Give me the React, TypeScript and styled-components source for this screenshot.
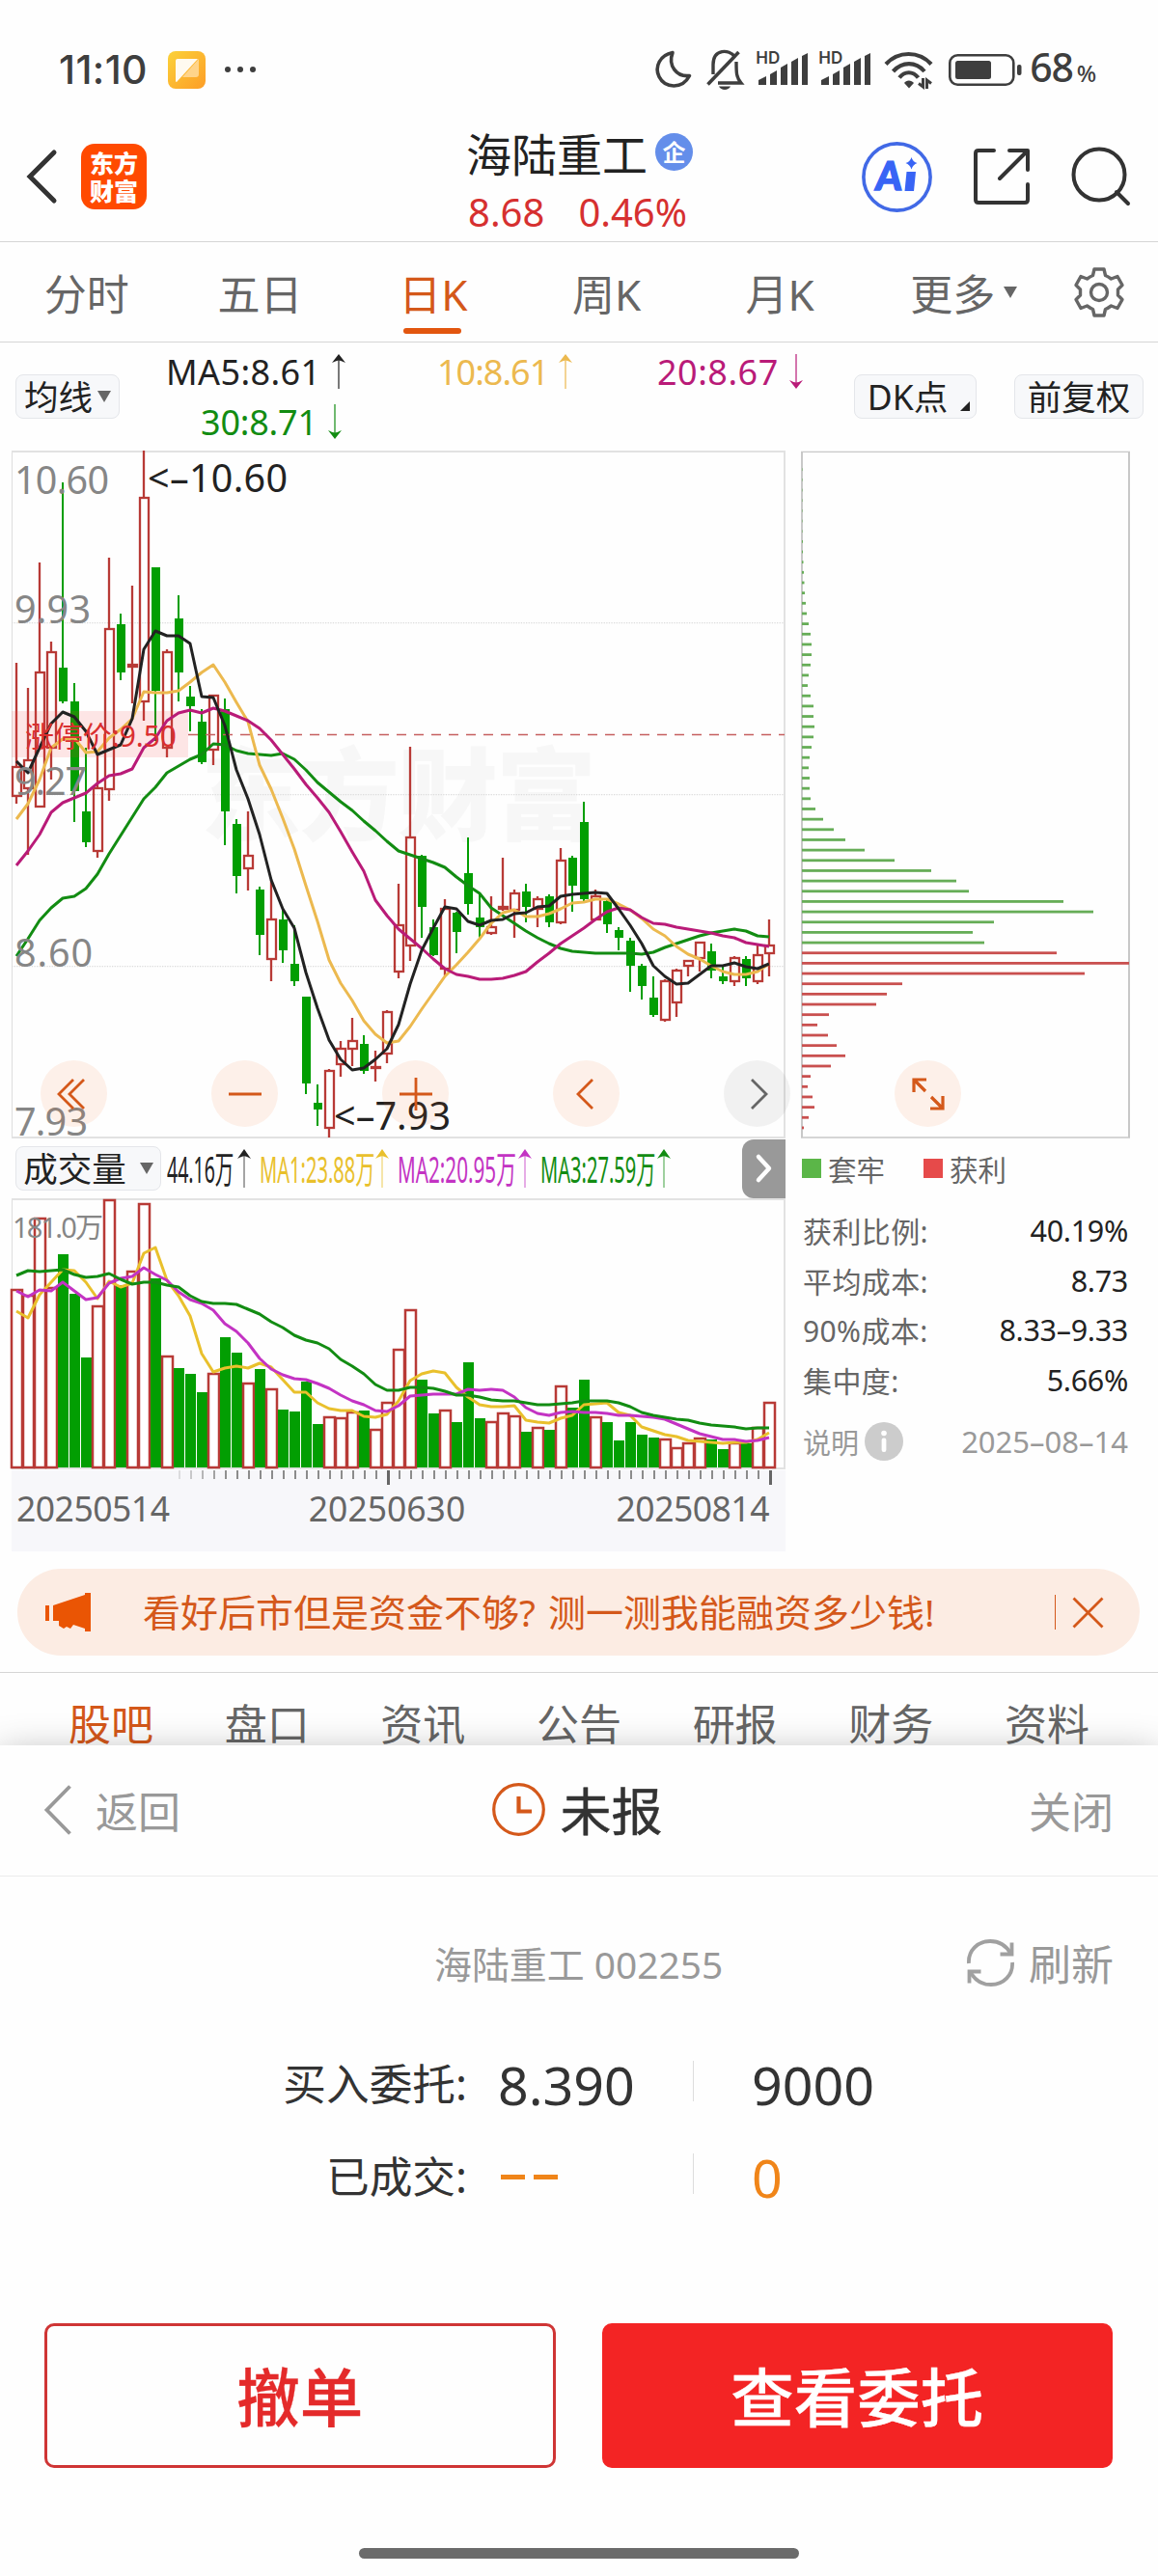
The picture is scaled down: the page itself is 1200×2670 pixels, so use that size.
import React from "react";
import styled, { createGlobalStyle } from "styled-components";

// [up?, high, body top, body bottom, low] in chart units
type ICandle = [number, number, number, number, number];

const START_X = 17;
const STEP = 12;
const RED = "#b83a36";
const GREEN = "#029e02";
const ORANGE = "#d4581a";

const candles: ICandle[] = [
  [1, 687, 795, 825, 833], [1, 713, 788, 817, 886], [1, 583, 697, 836, 836], [1, 665, 676, 775, 808],
  [0, 500, 692, 727, 729], [0, 708, 727, 820, 852], [0, 775, 841, 873, 878], [1, 782, 817, 882, 889],
  [1, 578, 652, 818, 830], [0, 636, 647, 697, 705], [1, 607, 689, 691, 729], [1, 467, 516, 727, 747],
  [0, 588, 588, 716, 768], [1, 673, 676, 775, 785], [0, 617, 641, 697, 727], [0, 711, 722, 732, 758],
  [0, 735, 748, 790, 792], [1, 721, 721, 777, 793], [0, 724, 735, 841, 876], [0, 849, 854, 908, 926],
  [1, 841, 887, 900, 923], [0, 919, 922, 969, 990], [1, 912, 953, 994, 1017], [0, 942, 953, 985, 998],
  [0, 959, 999, 1017, 1022], [0, 1033, 1033, 1123, 1134], [0, 1124, 1143, 1150, 1167], [1, 1108, 1110, 1169, 1179],
  [1, 1079, 1087, 1103, 1116], [1, 1055, 1079, 1087, 1105], [0, 1073, 1082, 1110, 1113], [1, 1089, 1106, 1107, 1121],
  [1, 1047, 1049, 1092, 1102], [1, 916, 959, 1007, 1014], [1, 774, 868, 980, 996], [0, 886, 887, 940, 972],
  [0, 953, 961, 990, 991], [1, 932, 942, 1004, 1011], [0, 945, 946, 966, 988], [0, 868, 905, 937, 948],
  [0, 925, 951, 961, 974], [1, 929, 961, 967, 969], [1, 889, 940, 942, 944], [1, 922, 926, 943, 972],
  [0, 916, 924, 940, 956], [1, 929, 932, 942, 961], [0, 927, 929, 956, 961], [1, 879, 892, 956, 958],
  [0, 887, 889, 918, 945], [0, 831, 852, 932, 934], [1, 922, 929, 953, 953], [0, 932, 934, 958, 967],
  [0, 961, 964, 972, 985], [0, 972, 975, 1001, 1028], [0, 999, 1001, 1022, 1036], [0, 1012, 1034, 1052, 1054],
  [1, 1015, 1017, 1057, 1059], [1, 1004, 1006, 1039, 1054], [1, 995, 996, 1001, 1012], [1, 977, 977, 993, 1007],
  [0, 978, 986, 1006, 1014], [0, 1002, 1012, 1017, 1020], [1, 991, 993, 1017, 1022], [0, 991, 994, 1014, 1022],
  [1, 978, 990, 1017, 1020], [1, 953, 980, 988, 1012],
];

const ma5 = [789, 801, 775, 750, 738, 743, 758, 782, 777, 772, 745, 673, 654, 659, 659, 667, 722, 723, 752, 798, 828, 865, 912, 942, 962, 1008, 1045, 1078, 1098, 1109, 1107, 1098, 1087, 1062, 1020, 985, 962, 940, 942, 955, 959, 954, 953, 947, 946, 940, 939, 929, 927, 926, 925, 926, 942, 959, 978, 1001, 1012, 1020, 1019, 1010, 1001, 1001, 998, 1002, 1004, 999];
const ma10 = [849, 833, 808, 775, 766, 765, 780, 779, 765, 756, 745, 717, 718, 718, 716, 707, 697, 689, 707, 728, 748, 793, 818, 848, 880, 918, 955, 995, 1019, 1037, 1058, 1072, 1081, 1079, 1064, 1046, 1029, 1012, 1000, 987, 973, 957, 946, 943, 950, 950, 947, 942, 936, 935, 932, 932, 937, 943, 952, 963, 970, 981, 989, 994, 1001, 1007, 1010, 1010, 1007, 999];
const ma20 = [897, 882, 865, 842, 832, 827, 822, 812, 804, 802, 797, 775, 765, 747, 739, 736, 739, 734, 737, 742, 747, 755, 767, 782, 797, 813, 827, 842, 862, 883, 903, 933, 949, 963, 973, 983, 994, 1004, 1010, 1012, 1015, 1015, 1014, 1011, 1007, 997, 988, 978, 970, 962, 953, 945, 941, 943, 951, 957, 958, 961, 963, 965, 967, 970, 972, 977, 979, 981];
const ma30 = [991, 973, 954, 941, 931, 929, 921, 906, 885, 866, 847, 828, 816, 801, 794, 787, 782, 771, 772, 778, 781, 782, 783, 781, 787, 798, 811, 821, 831, 840, 851, 861, 872, 882, 886, 890, 894, 899, 909, 918, 926, 941, 949, 957, 965, 972, 978, 983, 986, 987, 988, 988, 988, 988, 989, 987, 982, 978, 974, 970, 967, 965, 963, 965, 970, 971];

const volumes = [1336, 1342, 1262, 1334, 1300, 1341, 1407, 1353, 1243, 1332, 1317, 1247, 1325, 1405, 1418, 1424, 1443, 1423, 1386, 1402, 1433, 1419, 1439, 1461, 1463, 1432, 1476, 1468, 1469, 1463, 1462, 1481, 1453, 1398, 1357, 1430, 1465, 1461, 1474, 1412, 1470, 1473, 1464, 1467, 1484, 1479, 1482, 1436, 1459, 1430, 1468, 1474, 1493, 1474, 1487, 1490, 1491, 1500, 1495, 1490, 1492, 1502, 1495, 1496, 1479, 1453];
const vol1 = [1359, 1366, 1342, 1329, 1316, 1317, 1329, 1346, 1328, 1334, 1330, 1299, 1293, 1327, 1343, 1364, 1403, 1422, 1418, 1416, 1418, 1413, 1417, 1430, 1443, 1443, 1454, 1460, 1462, 1462, 1468, 1469, 1466, 1452, 1431, 1424, 1421, 1423, 1438, 1448, 1456, 1458, 1458, 1457, 1472, 1474, 1475, 1470, 1467, 1456, 1455, 1454, 1464, 1467, 1479, 1483, 1487, 1489, 1493, 1494, 1495, 1496, 1495, 1495, 1492, 1485];
const vol2 = [1338, 1344, 1337, 1338, 1329, 1338, 1347, 1345, 1330, 1325, 1323, 1314, 1321, 1327, 1339, 1347, 1351, 1358, 1372, 1380, 1392, 1408, 1419, 1425, 1429, 1430, 1434, 1439, 1446, 1452, 1456, 1462, 1463, 1457, 1447, 1446, 1445, 1445, 1445, 1440, 1441, 1440, 1441, 1448, 1459, 1465, 1467, 1464, 1463, 1464, 1464, 1465, 1467, 1467, 1468, 1469, 1471, 1476, 1481, 1486, 1489, 1492, 1492, 1494, 1493, 1490];
const vol3 = [1322, 1317, 1318, 1317, 1316, 1321, 1324, 1323, 1320, 1326, 1331, 1329, 1329, 1332, 1334, 1343, 1349, 1351, 1351, 1352, 1357, 1362, 1370, 1376, 1384, 1389, 1392, 1398, 1409, 1416, 1424, 1435, 1441, 1441, 1438, 1438, 1439, 1442, 1446, 1446, 1448, 1451, 1452, 1452, 1454, 1456, 1456, 1455, 1454, 1452, 1452, 1452, 1454, 1458, 1464, 1467, 1469, 1471, 1472, 1475, 1477, 1478, 1479, 1481, 1480, 1480];

const chips = [0.5, 0.5, 0.5, 0.5, 0.5, 0.5, 0.5, 1, 1, 1.5, 2, 2.5, 3, 4, 5, 7, 9, 10, 10, 9, 7, 6, 9, 12, 12, 13, 12, 10, 8, 7, 8, 8, 9, 14, 22, 33, 45, 65, 96, 134, 160, 173, 271, 302, 199, 177, 189, 264, 339, 293, 104, 88, 77, 28, 16, 27, 36, 45, 30, 9, 6, 11, 13, 7, 2];
const PROFIT_FROM = 47;

const toPoints = (list: number[]) => list.map((y, i) => `${START_X + i * STEP},${y}`).join(" ");

const Line = ({ list, color }: { list: number[]; color: string }) => (
  <polyline points={toPoints(list)} fill="none" stroke={color} strokeWidth="3" strokeLinejoin="round" />
);

const Arrow = ({ color, down, tall }: { color: string; down?: boolean; tall?: boolean }) => (
  <svg width="14" height={tall ? 40 : 36} viewBox="0 0 14 36" preserveAspectRatio="none" transform={down ? "rotate(180)" : undefined}>
    <path d="M7 4V36" stroke={color} strokeWidth="2" opacity={tall ? 0.4 : 0.6} />
    <path d="M7 0L14 9Q9 6.5 7 6.5Q5 6.5 0 9Z" fill={color} />
  </svg>
);

const KChart = () => (
  <svg width="802" height="713" viewBox="12 467 802 713">
    <g fill="#f7f7f7" fontSize="104" fontWeight="900">
      <text x="208" y="863" textLength="410">东方财富</text>
    </g>
    <path d="M12.5 467V1179" stroke="#dedede" strokeWidth="1" />
    <path d="M12 468H813V1179H12" fill="none" stroke="#e2e2e2" strokeWidth="2" />
    <path d="M12 645.7H812M12 823.7H812M12 1001.7H812" stroke="#dcdcdc" strokeWidth="1.3" strokeDasharray="1.3 1.3" />
    {candles.map(([up, high, top, bottom, low], i) => {
      const x = START_X + i * STEP;
      return up ? (
        <g key={i} stroke={RED} strokeWidth="2.3" fill="none">
          <path d={`M${x} ${high}V${top}M${x} ${bottom}V${low}`} />
          <rect x={x - 4} y={top} width="9" height={bottom - top} />
        </g>
      ) : (
        <g key={i} fill={GREEN}>
          <rect x={x - 1} y={high} width="2" height={low - high} />
          <rect x={x - 4} y={top} width="9" height={bottom - top} />
        </g>
      );
    })}
    <rect x="12" y="737" width="183" height="48" fill="#fb3b3b" opacity="0.13" />
    <path d="M195 761.5H813" stroke="#c66060" strokeWidth="1.3" strokeDasharray="10 8" />
    <Line list={ma30} color="#128c12" />
    <Line list={ma10} color="#ecb94f" />
    <Line list={ma20} color="#b91b78" />
    <Line list={ma5} color="#222222" />
    <text x="26" y="774" fontSize="30" fill="#da2f2f" textLength="157">涨停价:9.50</text>
    <g fontSize="39.5" fill="#868686">
      <text x="15" y="512" textLength="98">10.60</text>
      <text x="15" y="646" textLength="79">9.93</text>
      <text x="15" y="824" textLength="75">9.27</text>
      <text x="15" y="1002" textLength="81">8.60</text>
      <text x="15" y="1176.5" textLength="76">7.93</text>
    </g>
    <g fontSize="39.5" fill="#222222">
      <text x="153" y="509.5" textLength="145">{"<–10.60"}</text>
      <text x="346" y="1170.5" textLength="121">{"<–7.93"}</text>
    </g>
  </svg>
);

const VolumeChart = () => (
  <svg width="802" height="281" viewBox="12 1242 802 281">
    <path d="M12.5 1242V1522" stroke="#dedede" strokeWidth="1" />
    <path d="M12 1243H813V1522H12" fill="none" stroke="#e2e2e2" strokeWidth="2" />
    {volumes.map((y, i) => {
      const x = START_X + i * STEP;
      return candles[i][0] ? (
        <rect key={i} x={x - 5} y={y + 1} width="11" height={1520 - y} fill="#ffffff" stroke={RED} strokeWidth="2.5" />
      ) : (
        <rect key={i} x={x - 5} y={y} width="11" height={1521 - y} fill={GREEN} />
      );
    })}
    <Line list={vol1} color="#e9c02c" />
    <Line list={vol2} color="#c333c3" />
    <Line list={vol3} color="#128c12" />
    <text x="13" y="1283" fontSize="29" fill="#868686" textLength="94">181.0万</text>
  </svg>
);

const ChipChart = () => (
  <svg width="341" height="713" viewBox="830 467 341 713">
    <path d="M830 468.3H1171M830 1179H1171" stroke="#c8c8c8" strokeWidth="1.3" />
    <path d="M831 468V1179M1170 468V1179" stroke="#c8c8c8" strokeWidth="2" />
    {chips.map((w, i) => (
      <rect key={i} x="831" y={485.3 + i * 10.66} width={w} height="2.8" fill={i < PROFIT_FROM ? "#66ad57" : "#c9504f"} />
    ))}
  </svg>
);

const Ticks = () => (
  <svg width="802" height="16" viewBox="12 1524 802 16">
    {Array.from({ length: 52 }, (_, i) => {
      const major = i === 18 || i === 51;
      return (
        <rect key={i} x={185 + i * 12} y="1524" width={major ? 3 : 2} height={major ? 15 : 9}
          fill={major ? "#666666" : "#8c8c8c"} opacity={Math.min(1, 0.25 + i * 0.18)} />
      );
    })}
  </svg>
);

const Signal = () => (
  <SignalBox>
    <Hd>HD</Hd>
    <svg width="52" height="34" viewBox="0 0 52 34">
      <path d="M0 33V28L8 24V33ZM12 33V22L19 18V33ZM23 33V15L30 11V33ZM34 33V9L41 5V33ZM45 33V3L51 0V33Z" fill="#3e3e3e" />
    </svg>
  </SignalBox>
);

const StatusIcons = () => (
  <>
    <svg width="38" height="40" viewBox="0 0 38 40">
      <path d="M18 2.5C5 5 -1 17 4 27.5C10 39.5 28 41 35.5 26.5C22 28 13 16 18 2.5Z" fill="none" stroke="#3e3e3e" strokeWidth="3.6" strokeLinejoin="round" />
    </svg>
    <svg width="39" height="41" viewBox="0 0 39 41">
      <g fill="none" stroke="#3e3e3e" strokeWidth="3.4">
        <path d="M7 25V15C7 -2 24 -1 29 6.5M31 12C31 24 31 28 36 34H12" />
        <path d="M1.5 35.5L33.5 2" strokeWidth="3.6" />
      </g>
      <path d="M13 37.5H25C23 42 15 42 13 37.5Z" fill="#3e3e3e" />
    </svg>
    <Signal />
    <Signal />
    <svg width="52" height="39" viewBox="0 0 52 39">
      <g fill="none" stroke="#3e3e3e" strokeWidth="4.2">
        <path d="M2 13.5C15 -.5 36 -.5 49 13.5" />
        <path d="M9.5 21C19 10.5 33 10.5 42 21" />
        <path d="M16 27.5C21.5 20.5 30 20.5 35.5 27.5" />
      </g>
      <path d="M21 33C23 29.5 28.5 29.5 31 33L26 38.5Z" fill="#3e3e3e" />
      <path d="M40.5 28V37L36 33.5M44.5 39V30L49 33.5" fill="none" stroke="#3e3e3e" strokeWidth="3" />
    </svg>
    <Battery>
      <svg width="76" height="33" viewBox="0 0 76 33">
        <rect x="1.3" y="1.3" width="66" height="30.4" rx="8" fill="none" stroke="#3e3e3e" strokeWidth="2.6" />
        <rect x="7" y="7" width="37" height="19" rx="2.5" fill="#3e3e3e" />
        <rect x="71" y="11" width="4.5" height="11" rx="2" fill="#3e3e3e" />
      </svg>
    </Battery>
  </>
);

const Gear = () => (
  <svg width="52" height="52" viewBox="0 0 52 52" fill="none" stroke="#666666" strokeWidth="3.4" strokeLinejoin="round">
    <path d="M21 2H31L32.5 8.5Q35 9.5 38.5 12L45 9.5L50 18.5L45.5 23V29L50 33.5L45 42.5L38.5 40Q35 42.5 32.5 43.5L31 50H21L19.5 43.5Q17 42.5 13.5 40L7 42.5L2 33.5L6.5 29V23L2 18.5L7 9.5L13.5 12Q17 9.5 19.5 8.5Z" />
    <circle cx="26" cy="26" r="8.5" />
  </svg>
);

const App = () => {
  const periods = ["分时", "五日", "日K", "周K", "月K"];
  const infoTabs = ["股吧", "盘口", "资讯", "公告", "研报", "财务", "资料"];
  const costRows = [
    ["获利比例:", "40.19%"],
    ["平均成本:", "8.73"],
    ["90%成本:", "8.33–9.33"],
    ["集中度:", "5.66%"],
  ];

  return (
    <Phone>
      <GlobalStyle />
      <Page>
        <StatusBar>
          <Clock>11:10</Clock>
          <svg width="39" height="39" viewBox="0 0 39 39">
            <defs>
              <linearGradient id="note" x1="0" y1="0" x2="1" y2="1">
                <stop offset="0" stopColor="#fbd23a" />
                <stop offset="1" stopColor="#fd9d26" />
              </linearGradient>
            </defs>
            <rect width="39" height="39" rx="8" fill="url(#note)" />
            <path d="M32 8V24Q32 27 29 27H15Z" fill="#ffd48a" />
            <path d="M8 10Q8 8 10 8H31L9 32Q8 32 8 31Z" fill="#fffaf0" />
          </svg>
          <Dots><i /><i /><i /></Dots>
          <StatusRight>
            <StatusIcons />
            <Percent>68<small>%</small></Percent>
          </StatusRight>
        </StatusBar>

        <Header>
          <svg width="32" height="56" viewBox="0 0 32 56">
            <path d="M29 3L4 28L29 53" fill="none" stroke="#333333" strokeWidth="5" strokeLinecap="round" />
          </svg>
          <Logo>东方<br />财富</Logo>
          <TitleBox>
            <Title>海陆重工<Badge>企</Badge></Title>
            <Quote><span>8.68</span><span>0.46%</span></Quote>
          </TitleBox>
          <HeaderIcons>
            <svg width="73" height="73" viewBox="0 0 73 73">
              <circle cx="36.5" cy="36.5" r="34.6" fill="none" stroke="#4169e6" strokeWidth="3.6" />
              <text x="18" y="50" fontFamily="Lato" fontSize="41" fontWeight="900" fill="#3864f5" stroke="#3864f5" strokeWidth="1.5" textLength="27" lengthAdjust="spacingAndGlyphs" transform="skewX(-5)">A</text>
              <path d="M46.5 31H56L54 51H44.5Z" fill="#3864f5" />
              <path d="M51.5 16Q53 21 57.5 22Q53 23.5 51.5 28.5Q50 23.5 45.5 22Q50 21 51.5 16Z" fill="#3864f5" />
            </svg>
            <svg width="58" height="58" viewBox="0 0 58 58" fill="none" stroke="#333333" strokeWidth="4" strokeLinecap="round" strokeLinejoin="round">
              <path d="M21 2H5Q2 2 2 5V53Q2 56 5 56H53Q56 56 56 53V37M37 2H56V22M55 3L27 31" />
            </svg>
            <svg width="61" height="61" viewBox="0 0 61 61" fill="none" stroke="#333333" strokeWidth="4" strokeLinecap="round">
              <circle cx="29" cy="28" r="26.5" />
              <path d="M47 46L59 58" />
            </svg>
          </HeaderIcons>
        </Header>

        <Periods>
          {periods.map(name => (
            <Period key={name} $active={name === "日K"}>{name}</Period>
          ))}
          <Period $more>更多<Caret $gap={9} /></Period>
          <Gear />
        </Periods>

        <Toolbar>
          <ToolButton $width={108}>均线<Caret /></ToolButton>
          <Averages>
            <Average $color="#222222" $spacing={0.4}>MA5:8.61<Arrow color="#222222" /></Average>
            <Average $color="#ecb94f" $spacing={-1}>10:8.61<Arrow color="#ecb94f" /></Average>
            <Average $color="#b91b78" $spacing={0.5}>20:8.67<Arrow color="#b91b78" down /></Average>
            <Average $color="#128c12" $spacing={-0.2} $indent={36}>30:8.71<Arrow color="#128c12" down /></Average>
          </Averages>
          <ToolButton $width={127}>DK点<Corner /></ToolButton>
          <ToolButton $width={134}>前复权</ToolButton>
        </Toolbar>

        <Charts>
          <Left>
            <ChartBox>
              <KChart />
              <Controls>
                <Control><svg width="30" height="32" viewBox="0 0 30 32"><path d="M17 1L2 16L17 31M28 1L13 16L28 31" /></svg></Control>
                <Control><svg width="34" height="34" viewBox="0 0 34 34"><path d="M0 17H34" /></svg></Control>
                <Control><svg width="34" height="34" viewBox="0 0 34 34"><path d="M0 17H34M17 0V34" /></svg></Control>
                <Control><svg width="20" height="32" viewBox="0 0 20 32"><path d="M16 1L1 16L16 31" /></svg></Control>
                <Control $muted><svg width="20" height="32" viewBox="0 0 20 32"><path d="M4 1L19 16L4 31" /></svg></Control>
              </Controls>
            </ChartBox>
            <VolumeBar>
              <ToolButton $width={151}>成交量<Caret $gap={14} /></ToolButton>
              <Reading $width={87} $scale={0.5} $color="#222222"><span>44.16万</span><Arrow color="#222222" tall /></Reading>
              <Reading $width={134} $scale={0.515} $color="#e9c02c"><span>MA1:23.88万</span><Arrow color="#e9c02c" tall /></Reading>
              <Reading $width={139} $scale={0.53} $color="#c333c3"><span>MA2:20.95万</span><Arrow color="#c333c3" tall /></Reading>
              <Reading $width={135} $scale={0.515} $color="#128c12"><span>MA3:27.59万</span><Arrow color="#128c12" tall /></Reading>
              <NextButton>
                <svg width="18" height="30" viewBox="0 0 18 30"><path d="M3 3L14 15L3 27" fill="none" stroke="#ffffff" strokeWidth="4.5" strokeLinecap="round" strokeLinejoin="round" /></svg>
              </NextButton>
            </VolumeBar>
            <VolumeChart />
            <Axis>
              <Ticks />
              <Dates><span>20250514</span><span>20250630</span><span>20250814</span></Dates>
            </Axis>
          </Left>

          <Right>
            <ChartBox>
              <ChipChart />
              <ExpandButton>
                <svg width="34" height="34" viewBox="0 0 34 34"><path d="M2 15V2H15M2 2L14 14M32 19V32H19M32 32L20 20" strokeWidth="3.2" /></svg>
              </ExpandButton>
            </ChartBox>
            <Legend>
              <Square $color="#5bb648" />套牢
              <Square $color="#e64a4a" />获利
            </Legend>
            <CostList>
              {costRows.map(([name, value]) => (
                <CostRow key={name}><span>{name}</span><b>{value}</b></CostRow>
              ))}
            </CostList>
            <Note>
              说明
              <svg width="40" height="40" viewBox="0 0 40 40">
                <circle cx="20" cy="20" r="20" fill="#cccccc" />
                <circle cx="20" cy="11.5" r="2.8" fill="#ffffff" />
                <rect x="17.6" y="16.5" width="4.8" height="14.5" rx="2.2" fill="#ffffff" />
              </svg>
              <time>2025–08–14</time>
            </Note>
          </Right>
        </Charts>

        <Banner>
          <svg width="47" height="40" viewBox="0 0 47 40" fill="#ea5504">
            <path d="M0 13H4V29H0ZM8 13L41 2V0H47V40H41V37L29 33L26 37L22 35L19 37L14 34V29H8Z" />
          </svg>
          <BannerText>看好后市但是资金不够? 测一测我能融资多少钱!</BannerText>
          <Bar />
          <svg width="33" height="33" viewBox="0 0 33 33"><path d="M1.5 1.5L31.5 31.5M31.5 1.5L1.5 31.5" stroke={ORANGE} strokeWidth="2.8" /></svg>
        </Banner>

        <InfoTabs>
          {infoTabs.map((name, i) => <InfoTab key={name} $active={i === 0}>{name}</InfoTab>)}
        </InfoTabs>
      </Page>

      <Sheet>
        <SheetHeader>
          <BackLink>
            <svg width="28" height="52" viewBox="0 0 28 52"><path d="M26.5 1.5L2.5 26L26.5 50.5" fill="none" stroke="#999999" strokeWidth="3.8" /></svg>
            返回
          </BackLink>
          <SheetTitle>
            <svg width="55" height="55" viewBox="0 0 55 55" fill="none" stroke={ORANGE}>
              <circle cx="27.5" cy="27.5" r="25.8" strokeWidth="3.2" />
              <path d="M27.5 14V29.5H41" strokeWidth="4.2" />
            </svg>
            未报
          </SheetTitle>
          <CloseLink>关闭</CloseLink>
        </SheetHeader>

        <StockRow>
          <StockName>海陆重工 002255</StockName>
          <Refresh>
            <svg width="49" height="49" viewBox="0 0 49 49" fill="none" stroke="#a0a0a0" strokeWidth="3.8">
              <path d="M2 25C1 12 11 2 24 2C34 2 41 7 45.5 15M47 24C48 37 38 47 25 47C15 47 8 42 3.5 34" />
              <path d="M46.5 3.5V15.5H34.5M2.5 45.5V33.5H14.5" />
            </svg>
            刷新
          </Refresh>
        </StockRow>

        <OrderGrid>
          <OrderLabel>买入委托:</OrderLabel>
          <OrderValue>8.390</OrderValue>
          <OrderValue $split>9000</OrderValue>
          <OrderLabel>已成交:</OrderLabel>
          <OrderValue $pending><Dash /><Dash /></OrderValue>
          <OrderValue $split $pending>0</OrderValue>
        </OrderGrid>

        <Actions>
          <ActionButton>撤单</ActionButton>
          <ActionButton $primary>查看委托</ActionButton>
        </Actions>
        <HomeBar />
      </Sheet>
    </Phone>
  );
};

export default App;

const GlobalStyle = createGlobalStyle`
  * {
    box-sizing: border-box;
  }
  body {
    margin: 0;
    background-color: #fdfdfd;
  }
  svg {
    display: block;
    flex: none;
    overflow: visible;
  }
`;
const Phone = styled.div`
  width: 1200px;
  height: 2670px;
  overflow: hidden;
  background-color: #fefefe;
  color: #222222;
  font-family: "Noto Sans", "Noto Sans CJK SC", sans-serif;
  white-space: nowrap;
`;
const Page = styled.div`
  height: 1809px;
`;
const StatusBar = styled.div`
  height: 112px;
  padding: 32px 65px 0 62px;
  display: flex;
  align-items: center;
  color: #3e3e3e;
`;
const Clock = styled.div`
  width: 112px;
  margin-left: -1px;
  margin-right: 1px;
  font: 500 41px/80px Inter, sans-serif;
  letter-spacing: 0.4px;
`;
const Dots = styled.div`
  display: flex;
  gap: 7px;
  margin-left: 20px;

  i {
    width: 6px;
    height: 6px;
    border-radius: 50%;
    background-color: #3e3e3e;
  }
`;
const StatusRight = styled.div`
  display: flex;
  align-items: center;
  margin-left: auto;

  & > svg {
    margin-right: 15px;
  }
`;
const SignalBox = styled.div`
  position: relative;
  margin-right: 13px;
`;
const Hd = styled.span`
  position: absolute;
  left: -3px;
  top: -4px;
  font: 600 17px/18px Inter, sans-serif;
`;
const Battery = styled.div`
  margin-right: 8px;
`;
const Percent = styled.div`
  font: 500 41px/80px "Noto Sans", sans-serif;
  letter-spacing: -1.2px;

  small {
    margin-left: 4px;
    font-size: 24px;
  }
`;
const Header = styled.div`
  height: 139px;
  padding: 4px 29px 0 27px;
  display: flex;
  align-items: center;
  border-bottom: 1px solid #d6d6d6;
`;
const Logo = styled.div`
  width: 68px;
  height: 68px;
  margin-left: 25px;
  padding-top: 5px;
  border-radius: 14px;
  background-color: #ff4a00;
  color: #ffffff;
  font: 900 25px/29px "Noto Sans CJK SC", sans-serif;
  text-align: center;
`;
const TitleBox = styled.div`
  margin-left: 331px;
  height: 136px;
`;
const Title = styled.div`
  display: flex;
  align-items: center;
  height: 62px;
  margin-top: 11px;
  font-size: 47px;
`;
const Badge = styled.span`
  width: 39px;
  height: 39px;
  margin-left: 8px;
  border-radius: 50%;
  background-color: #648eea;
  color: #ffffff;
  font: 700 24px/38px "Noto Sans CJK SC", sans-serif;
  text-align: center;
`;
const Quote = styled.div`
  display: flex;
  justify-content: space-between;
  width: 229px;
  padding-top: 5px;
  padding-left: 2px;
  color: #d63030;
  font-size: 40px;
  line-height: 54px;
`;
const HeaderIcons = styled.div`
  display: flex;
  align-items: center;
  gap: 43px;
  margin-left: auto;
`;
const Periods = styled.div`
  height: 104px;
  display: flex;
  align-items: center;
  border-bottom: 1px solid #d6d6d6;

  & > svg {
    margin: 0 auto;
  }
`;
const Period = styled.div<{ $active?: boolean; $more?: boolean }>`
  position: relative;
  display: flex;
  align-items: center;
  justify-content: center;
  width: 179.6px;
  height: 102px;
  padding-left: ${prop => prop.$more ? 22 : 0}px;
  font-size: 44px;
  color: ${prop => prop.$active ? ORANGE : "#666666"};

  &::after {
    content: "";
    display: ${prop => prop.$active ? "block" : "none"};
    position: absolute;
    left: 59px;
    bottom: 8px;
    width: 60px;
    height: 6px;
    border-radius: 3px;
    background-color: #e2560f;
  }
`;
const Caret = styled.i<{ $gap?: number }>`
  margin-left: ${prop => prop.$gap || 5}px;
  border: 7px solid transparent;
  border-top: 12px solid #666666;
  border-bottom: none;
`;
const Toolbar = styled.div`
  height: 112px;
  padding: 0 15px 0 16px;
  display: flex;
  align-items: center;
`;
const ToolButton = styled.div<{ $width: number }>`
  position: relative;
  flex: none;
  display: flex;
  align-items: center;
  justify-content: center;
  width: ${prop => prop.$width}px;
  height: 46px;
  border: 1.5px solid #e4e6ea;
  border-radius: 8px;
  background-color: #f7f8fa;
  font-size: 35.5px;
  line-height: 44px;

  & + & {
    margin-left: 39px;
  }
  &:nth-last-child(2) {
    padding-right: 16px;
  }
`;
const Corner = styled.i`
  position: absolute;
  right: 6px;
  bottom: 7px;
  border: 5.5px solid #222222;
  border-top-color: transparent;
  border-left-color: transparent;
`;
const Averages = styled.div`
  flex: 1;
  height: 104px;
  display: grid;
  grid-template-columns: 281px 228px 1fr;
  grid-template-rows: 52px 52px;
  padding-left: 48px;
`;
const Average = styled.div<{ $color: string; $spacing: number; $indent?: number }>`
  display: flex;
  align-items: center;
  padding-left: ${prop => prop.$indent || 0}px;
  color: ${prop => prop.$color};
  font-size: 36px;
  letter-spacing: ${prop => prop.$spacing}px;

  svg {
    margin-left: 11px;
  }
`;
const Charts = styled.div`
  display: flex;
  height: 1140px;
  padding-left: 12px;
`;
const Left = styled.div`
  width: 802px;
  margin-right: 16px;
`;
const Right = styled.div`
  width: 341px;
`;
const ChartBox = styled.div`
  position: relative;
  height: 713px;
`;
const Controls = styled.div`
  position: absolute;
  left: 30px;
  top: 632px;
  width: 777px;
  display: flex;
  justify-content: space-between;
`;
const Control = styled.div<{ $muted?: boolean }>`
  width: 69px;
  height: 69px;
  display: flex;
  align-items: center;
  justify-content: center;
  border-radius: 50%;
  background-color: ${prop => prop.$muted ? "rgba(0, 0, 0, 0.05)" : "rgba(240, 90, 10, 0.085)"};

  svg {
    fill: none;
    stroke: ${prop => prop.$muted ? "#666666" : ORANGE};
    stroke-width: 2.8px;
  }
  &:first-child svg {
    margin-right: 5px;
  }
`;
const ExpandButton = styled(Control)`
  position: absolute;
  left: 97px;
  top: 632px;
`;
const VolumeBar = styled.div`
  height: 62px;
  display: flex;
  align-items: center;
  padding-left: 4px;

  ${ToolButton} {
    margin-right: 6px;
    padding-right: 0;
  }
`;
const Reading = styled.div<{ $width: number; $scale: number; $color: string }>`
  flex: none;
  display: flex;
  align-items: center;
  justify-content: space-between;
  width: ${prop => prop.$width}px;
  margin-right: 9px;
  color: ${prop => prop.$color};

  span {
    width: 0;
    font-size: 39px;
    line-height: 60px;
    transform: scaleX(${prop => prop.$scale});
    transform-origin: left;
  }
`;
const NextButton = styled.div`
  width: 45px;
  height: 61px;
  margin-left: auto;
  display: flex;
  align-items: center;
  justify-content: center;
  border-radius: 12px 0 0 12px;
  background-color: #999999;
`;
const Axis = styled.div`
  height: 84px;
  margin-top: 1px;
  background-color: #f7f7fa;
`;
const Dates = styled.div`
  display: flex;
  justify-content: space-between;
  padding: 0 17px 0 5px;
  color: #666666;
  font-size: 35.5px;
  line-height: 47px;
  letter-spacing: -0.5px;

  span:nth-child(2) {
    margin-right: 12px;
    letter-spacing: 0;
  }
`;
const Legend = styled.div`
  height: 62px;
  display: flex;
  align-items: center;
  color: #666666;
  font-size: 29.5px;
`;
const Square = styled.i<{ $color: string }>`
  width: 20px;
  height: 20px;
  margin: 0 7px 0 1px;
  background-color: ${prop => prop.$color};

  &:last-of-type {
    margin-left: 40px;
  }
`;
const CostList = styled.div`
  padding-top: 7px;
`;
const CostRow = styled.div`
  display: flex;
  align-items: center;
  justify-content: space-between;
  height: 51.8px;
  padding: 0 2px;
  color: #666666;
  font-size: 30px;

  span {
    letter-spacing: 0.4px;
  }
  b {
    color: #222222;
    font-weight: 400;
    font-size: 30.5px;
    letter-spacing: -0.3px;
  }
`;
const Note = styled.div`
  display: flex;
  align-items: center;
  height: 76px;
  padding: 0 2px;
  color: #999999;
  font-size: 29px;

  svg {
    margin-left: 6px;
  }
  time {
    margin-left: auto;
    font-size: 31px;
  }
`;
const Banner = styled.div`
  height: 90px;
  margin: 19px 19px 17px 18px;
  padding: 0 37px 0 29px;
  display: flex;
  align-items: center;
  border-radius: 45px;
  background-color: #fcece3;
`;
const BannerText = styled.div`
  flex: 1;
  margin-left: 54px;
  color: ${ORANGE};
  font-size: 39px;
  line-height: 88px;
  word-spacing: 3px;
`;
const Bar = styled.i`
  width: 1.5px;
  height: 36px;
  margin-right: 17px;
  background-color: ${ORANGE};
`;
const InfoTabs = styled.div`
  height: 106px;
  display: flex;
  justify-content: space-between;
  padding: 0 71px 0 71px;
  border-top: 1px solid #d6d6d6;
`;
const InfoTab = styled.div<{ $active: boolean }>`
  color: ${prop => prop.$active ? ORANGE : "#666666"};
  font-size: 44px;
  line-height: 106px;
`;
const Sheet = styled.div`
  position: relative;
  height: 861px;
  background-color: #fefefe;
  box-shadow: 0 8px 36px 0 rgba(0, 0, 0, 0.3);
`;
const SheetHeader = styled.div`
  height: 136px;
  padding: 0 46px 2px;
  display: grid;
  grid-template-columns: 1fr auto 1fr;
  align-items: center;
  border-bottom: 1px solid #ececec;
`;
const BackLink = styled.div`
  display: flex;
  align-items: center;
  gap: 25px;
  color: #999999;
  font-size: 44px;
`;
const SheetTitle = styled.div`
  display: flex;
  align-items: center;
  gap: 16px;
  padding-right: 4px;
  color: #333333;
  font-size: 53px;
  -webkit-text-stroke: 0.5px #333333;
`;
const CloseLink = styled.div`
  color: #999999;
  font-size: 44px;
  text-align: right;
`;
const StockRow = styled.div`
  height: 178px;
  display: flex;
  align-items: center;
  justify-content: space-between;
  padding: 0 46px 0 450px;
  color: #999999;
`;
const StockName = styled.div`
  font-size: 38.9px;
`;
const Refresh = styled.div`
  display: flex;
  align-items: center;
  gap: 15px;
  font-size: 44px;
`;
const OrderGrid = styled.div`
  display: grid;
  grid-template-columns: 484px 234px 1fr;
  grid-auto-rows: 96px;
  align-items: center;
  margin-top: -14px;
`;
const OrderLabel = styled.div`
  color: #333333;
  font-size: 44.7px;
  text-align: right;
`;
const OrderValue = styled.div<{ $split?: boolean; $pending?: boolean }>`
  display: flex;
  align-items: center;
  gap: 9px;
  height: 42px;
  padding-top: 7px;
  padding-left: ${prop => prop.$split ? 60 : 32}px;
  border-left: ${prop => prop.$split ? "1px solid #dddddd" : "none"};
  color: ${prop => prop.$pending ? "#f08519" : "#333333"};
  font-size: 55.5px;
  line-height: 42px;
`;
const Dash = styled.i`
  width: 25px;
  height: 5px;
  margin-left: 3px;
  margin-right: -3px;
  background-color: #f08519;
`;
const Actions = styled.div`
  display: flex;
  gap: 48px;
  margin-top: 107px;
  padding: 0 47px 0 46px;
`;
const ActionButton = styled.div<{ $primary?: boolean }>`
  flex: 1;
  height: 150px;
  border: 3px solid ${prop => prop.$primary ? "#f32424" : "#cf3535"};
  border-radius: 10px;
  background-color: ${prop => prop.$primary ? "#f32424" : "#fefefe"};
  color: ${prop => prop.$primary ? "#ffffff" : "#e42a2a"};
  font-size: 65.5px;
  font-weight: 500;
  line-height: 148px;
  text-align: center;
  -webkit-text-stroke: 0.3px;
`;
const HomeBar = styled.div`
  width: 456px;
  height: 11px;
  margin: 83px auto 0;
  border-radius: 6px;
  background-color: #6b6b6b;
`;
